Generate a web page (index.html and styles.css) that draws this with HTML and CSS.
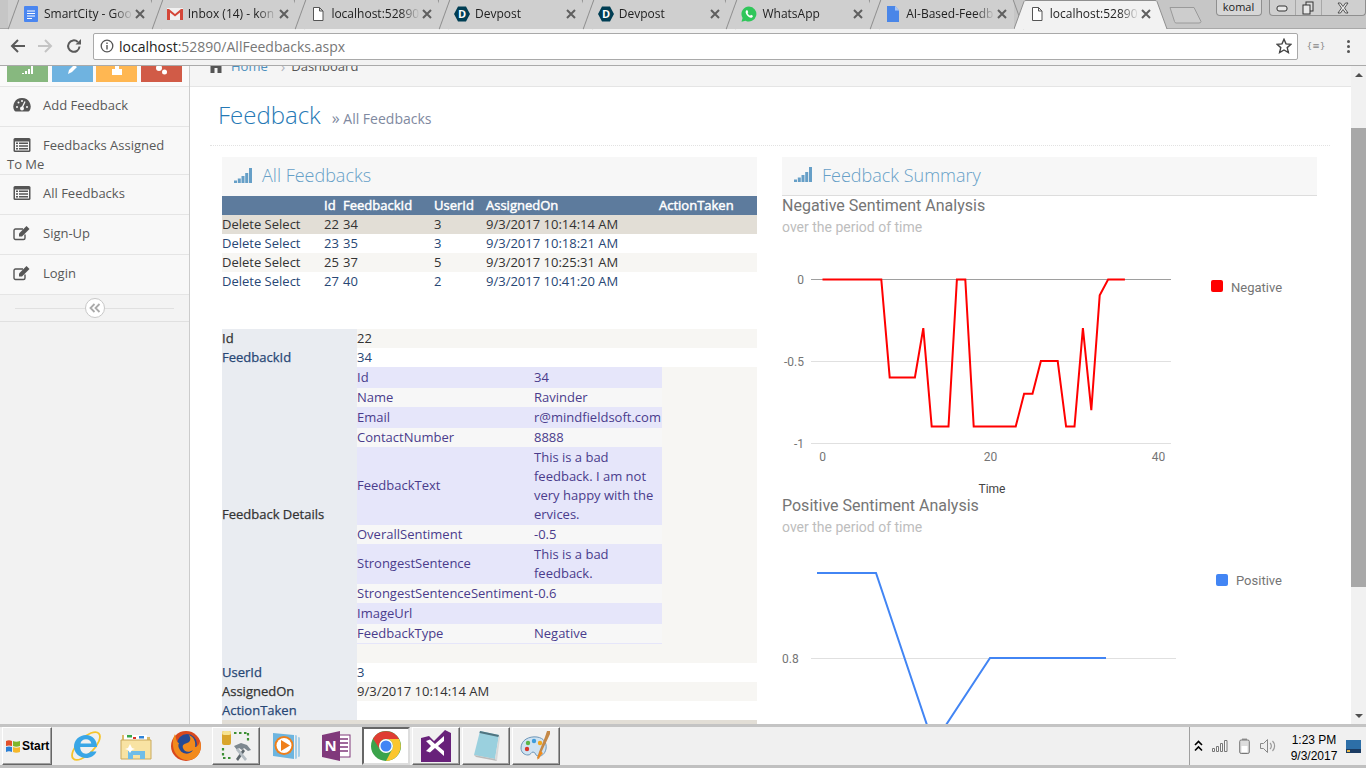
FILE: index.html
```html
<!DOCTYPE html>
<html lang="en">
<head>
<meta charset="utf-8">
<title>AllFeedbacks</title>
<link rel="stylesheet" href="styles.css">
</head>
<body>
<svg class="defs" width="0" height="0" aria-hidden="true"><defs>
  <symbol id="tab-close" viewBox="0 0 12 12"><path d="M2 2l8 8M10 2l-8 8" stroke="#5f5f5f" stroke-width="2" fill="none"/></symbol>
  <symbol id="list-alt" viewBox="0 0 18 16"><rect x=".5" y="1" width="17" height="14" rx="1.500" fill="#555"/><rect x="2" y="4.500" width="14" height="9" fill="#f8f8f8"/><path d="M3 6.300h2M6 6.300h9M3 9h2M6 9h9M3 11.700h2M6 11.700h9" stroke="#555" stroke-width="1.500"/></symbol>
  <symbol id="edit" viewBox="0 0 18 16"><path d="M12 9.500V13a1.500 1.500 0 0 1-1.500 1.500h-8A1.500 1.500 0 0 1 1 13V5.500A1.500 1.500 0 0 1 2.500 4H10" fill="none" stroke="#555" stroke-width="1.400"/><path d="M6 8.500l7.500-7.500 3 3L9 11.500H6z" fill="#555"/></symbol>
  <symbol id="signal" viewBox="0 0 18 15"><path d="M0 12.500h3V15H0zM3.800 10.500h3V15h-3zM7.500 8h3v7h-3zM11.200 5h3v10h-3zM15 0h3v15h-3z" fill="#669fc7"/></symbol>
</defs></svg>
<div class="screen">
  <header class="browser">
    <div class="tabstrip">
      <div class="tab">
        <svg class="tab-ico" viewBox="0 0 16 16"><rect x="1" y="0" width="14" height="16" rx="1" fill="#4a86f0"/><path d="M4 5h8M4 7.500h8M4 10h8M4 12.500h5" stroke="#fff" stroke-width="1"/></svg>
        <span class="tab-title">SmartCity - Goo</span><svg class="tab-x"><use href="#tab-close"/></svg>
      </div>
      <div class="tab">
        <svg class="tab-ico" viewBox="0 0 16 16"><rect x="0" y="2" width="16" height="12" fill="#f1f1f1"/><path d="M0 3v11h3V6.500l5 4 5-4V14h3V3h-2L8 8 2 3z" fill="#d44638"/></svg>
        <span class="tab-title">Inbox (14) - kon</span><svg class="tab-x"><use href="#tab-close"/></svg>
      </div>
      <div class="tab">
        <svg class="tab-ico" viewBox="0 0 16 16"><path d="M3.500 1.500h6l3.500 3.500v9.500h-9.500zM9.500 1.500v3.500h3.500" fill="#fff" stroke="#555" stroke-width="1"/></svg>
        <span class="tab-title">localhost:52890</span><svg class="tab-x"><use href="#tab-close"/></svg>
      </div>
      <div class="tab">
        <svg class="tab-ico" viewBox="0 0 16 16"><path d="M4 .5h8L16 8l-4 7.500H4L0 8z" fill="#003e54"/><text x="8" y="12" class="hex-d">D</text></svg>
        <span class="tab-title">Devpost</span><svg class="tab-x"><use href="#tab-close"/></svg>
      </div>
      <div class="tab">
        <svg class="tab-ico" viewBox="0 0 16 16"><path d="M4 .5h8L16 8l-4 7.500H4L0 8z" fill="#003e54"/><text x="8" y="12" class="hex-d">D</text></svg>
        <span class="tab-title">Devpost</span><svg class="tab-x"><use href="#tab-close"/></svg>
      </div>
      <div class="tab">
        <svg class="tab-ico" viewBox="0 0 16 16"><path d="M8 .5a7.500 7.500 0 0 0-6.400 11.400L.5 15.800l4-1.100A7.500 7.500 0 1 0 8 .5z" fill="#2fc65a"/><path d="M5.400 4.200c-1.200 1-1 3 .6 5 1.500 1.800 3.500 3 5 2.200.8-.4 1-1.300.8-1.700L10 8.800l-.9 1C8 9.400 7 8.300 6.500 7.100l.8-.9-.9-2z" fill="#fff"/></svg>
        <span class="tab-title">WhatsApp</span><svg class="tab-x"><use href="#tab-close"/></svg>
      </div>
      <div class="tab">
        <svg class="tab-ico" viewBox="0 0 16 16"><path d="M2 0h8l4 4.500V16H2z" fill="#4a86e8"/><path d="M10 0l4 4.500h-4z" fill="#a9c6f5"/></svg>
        <span class="tab-title">AI-Based-Feedb</span><svg class="tab-x"><use href="#tab-close"/></svg>
      </div>
      <div class="tab tab-active">
        <svg class="tab-shape" viewBox="0 0 154 29"><path d="M0 29 L10 1.500 Q10.500 .5 12 .5 H141 Q142.500 .5 143 1.500 L153 29" fill="#f2f2f2" stroke="#8f8f8f"/></svg>
        <svg class="tab-ico" viewBox="0 0 16 16"><path d="M3.500 1.500h6l3.500 3.500v9.500h-9.500zM9.500 1.500v3.500h3.500" fill="#fff" stroke="#555" stroke-width="1"/></svg>
        <span class="tab-title">localhost:52890</span><svg class="tab-x"><use href="#tab-close"/></svg>
      </div>
      <svg class="newtab" viewBox="0 0 33 18"><path d="M1 1.500H25L32 15.500Q32 17 30 17H7Q6 17 5.500 15.500z" fill="#cdcdcd" stroke="#9a9a9a"/></svg>
      <div class="winbar">
        <span class="userbtn">komal</span>
        <div class="winbtns">
          <span class="winbtn winbtn-min"><svg viewBox="0 0 12 8" class="win-ico"><rect x="1" y="2" width="10" height="5" rx="2" fill="#e8e8e8" stroke="#333"/></svg></span>
          <span class="winbtn winbtn-max"><svg viewBox="0 0 12 14" class="win-ico win-ico-max"><rect x="4" y="1" width="7" height="9" fill="#ddd" stroke="#333"/><rect x="1" y="4" width="7" height="9" fill="#e8e8e8" stroke="#333"/></svg></span>
          <span class="winbtn winbtn-close"><svg viewBox="0 0 14 12" class="win-ico win-ico-close"><path d="M2 1h2.500L7 4.500 9.500 1H12L8.500 6 12 11H9.500L7 7.500 4.500 11H2L5.500 6z" fill="#e8e8e8" stroke="#333" stroke-width=".8"/></svg></span>
        </div>
      </div>
    </div>
    <div class="toolbar">
      <svg class="nav-ico" viewBox="0 0 16 16"><path d="M15 8H2M8 2 2 8l6 6" fill="none" stroke="#5a5a5a" stroke-width="2"/></svg>
      <svg class="nav-ico nav-fwd" viewBox="0 0 16 16"><path d="M1 8h13M8 2l6 6-6 6" fill="none" stroke="#c4c4c4" stroke-width="2"/></svg>
      <svg class="nav-ico nav-reload" viewBox="0 0 16 16"><path d="M13.500 8.500A5.700 5.700 0 1 1 11.800 4" fill="none" stroke="#5a5a5a" stroke-width="2"/><path d="M9.500 6.500H15V1z" fill="#5a5a5a"/></svg>
      <div class="omnibox">
        <svg class="info-ico" viewBox="0 0 14 14"><circle cx="7" cy="7" r="5.800" fill="none" stroke="#555" stroke-width="1.300"/><path d="M7 6v4.500M7 3.500v1.500" stroke="#555" stroke-width="1.400"/></svg>
        <span class="url"><span class="url-host">localhost</span>:52890/AllFeedbacks.aspx</span>
        <svg class="star" viewBox="0 0 16 16"><path d="M8 1.300l2 4.600 5 .4-3.800 3.300 1.200 4.900L8 12l-4.400 2.500 1.200-4.900L1 6.300l5-.4z" fill="none" stroke="#444" stroke-width="1.400"/></svg>
      </div>
      <span class="ext">{≡}</span>
      <span class="dots"><i></i><i></i><i></i></span>
    </div>
  </header>

  <div class="page">
    <aside class="sidebar">
      <div class="shortcuts">
        <span class="tile tile-green"><svg viewBox="0 0 14 10" class="tile-ico"><path d="M1 9h2V8H1zM4 9h2V6H4zM7 9h2V4H7zM10 9h2V1h-2z" fill="#fff"/></svg></span>
        <span class="tile tile-blue"><svg viewBox="0 0 14 10" class="tile-ico"><path d="M3 9l1-4 5-5 3 2-5 5z" fill="#fff"/></svg></span>
        <span class="tile tile-yellow"><svg viewBox="0 0 14 10" class="tile-ico"><path d="M2 4h10v6H2zM5 4V1h4v3" fill="#fff"/></svg></span>
        <span class="tile tile-red"><svg viewBox="0 0 14 10" class="tile-ico"><circle cx="5" cy="3" r="3" fill="#fff"/><circle cx="10.500" cy="7" r="2.500" fill="#fff"/></svg></span>
      </div>
      <ul class="menu">
        <li class="menu-item">
          <svg class="menu-ico" viewBox="0 0 18 16"><path d="M9 1a8.500 8.500 0 0 0-7.500 12.800c.3.500.7.700 1.200.7h12.600c.5 0 .9-.2 1.200-.7A8.500 8.500 0 0 0 9 1z" fill="#555"/><path d="M9 11 12 4.500" stroke="#f8f8f8" stroke-width="1.300"/><circle cx="9" cy="11.500" r="2" fill="#f8f8f8"/><circle cx="4" cy="10" r="1" fill="#f8f8f8"/><circle cx="5.500" cy="5.500" r="1" fill="#f8f8f8"/><circle cx="9" cy="4" r="1" fill="#f8f8f8"/><circle cx="14" cy="10" r="1" fill="#f8f8f8"/></svg>Add Feedback</li>
        <li class="menu-item menu-wrap"><svg class="menu-ico"><use href="#list-alt"/></svg>Feedbacks Assigned To Me</li>
        <li class="menu-item"><svg class="menu-ico"><use href="#list-alt"/></svg>All Feedbacks</li>
        <li class="menu-item"><svg class="menu-ico"><use href="#edit"/></svg>Sign-Up</li>
        <li class="menu-item"><svg class="menu-ico"><use href="#edit"/></svg>Login</li>
      </ul>
      <div class="collapse"><span class="collapse-btn"><svg class="collapse-ico" viewBox="0 0 12 10"><path d="M5.500 1 1.500 5l4 4M10.500 1l-4 4 4 4" fill="none" stroke="#aaa" stroke-width="1.800"/></svg></span></div>
    </aside>

    <main class="content">
      <div class="breadcrumbs">
        <div class="crumbs-in">
          <svg class="home-ico" viewBox="0 0 16 14"><path d="M8 0 0 7h2.500v7h4V9h3v5h4V7H16z" fill="#555"/></svg>
          <a class="crumb-home">Home</a><span class="crumb-sep">›</span><span class="crumb-cur">Dashboard</span>
        </div>
      </div>
      <div class="inner">
        <div class="page-header">
          <h1 class="page-title">Feedback</h1><small class="page-sub"><span class="raquo">»</span> All Feedbacks</small>
        </div>
        <div class="cols">
          <section class="col">
            <div class="widget-head">
              <svg class="bars"><use href="#signal"/></svg>
              <h4 class="widget-title">All Feedbacks</h4>
            </div>
            <table class="grid">
              <colgroup><col class="g1"><col class="g2"><col class="g3"><col class="g4"><col class="g5"><col class="g6"></colgroup>
              <thead><tr><th></th><th>Id</th><th>FeedbackId</th><th>UserId</th><th>AssignedOn</th><th>ActionTaken</th></tr></thead>
              <tbody>
                <tr class="r-sel"><td>Delete Select</td><td>22</td><td>34</td><td>3</td><td>9/3/2017 10:14:14 AM</td><td></td></tr>
                <tr class="r-a"><td>Delete Select</td><td>23</td><td>35</td><td>3</td><td>9/3/2017 10:18:21 AM</td><td></td></tr>
                <tr class="r-b"><td>Delete Select</td><td>25</td><td>37</td><td>5</td><td>9/3/2017 10:25:31 AM</td><td></td></tr>
                <tr class="r-a"><td>Delete Select</td><td>27</td><td>40</td><td>2</td><td>9/3/2017 10:41:20 AM</td><td></td></tr>
              </tbody>
            </table>
            <table class="details">
              <colgroup><col class="d1"><col class="d2"></colgroup>
              <tr class="r-b"><th>Id</th><td>22</td></tr>
              <tr class="r-a"><th>FeedbackId</th><td>34</td></tr>
              <tr class="r-b"><th class="th-up">Feedback Details</th><td>
                <table class="nested">
                  <colgroup><col class="n1"><col class="n2"></colgroup>
                  <tr class="n-a"><td>Id</td><td>34</td></tr>
                  <tr class="n-b"><td>Name</td><td>Ravinder</td></tr>
                  <tr class="n-a"><td>Email</td><td>r@mindfieldsoft.com</td></tr>
                  <tr class="n-b"><td>ContactNumber</td><td>8888</td></tr>
                  <tr class="n-a"><td class="n-up">FeedbackText</td><td>This is a bad feedback. I am not very happy with the ervices.</td></tr>
                  <tr class="n-b"><td>OverallSentiment</td><td>-0.5</td></tr>
                  <tr class="n-a"><td class="n-up">StrongestSentence</td><td>This is a bad feedback.</td></tr>
                  <tr class="n-b"><td>StrongestSentenceSentiment</td><td>-0.6</td></tr>
                  <tr class="n-a"><td>ImageUrl</td><td></td></tr>
                  <tr class="n-b n-last"><td>FeedbackType</td><td>Negative</td></tr>
                </table>
              </td></tr>
              <tr class="r-a"><th>UserId</th><td>3</td></tr>
              <tr class="r-b"><th>AssignedOn</th><td>9/3/2017 10:14:14 AM</td></tr>
              <tr class="r-a"><th>ActionTaken</th><td></td></tr>
              <tr class="r-foot"><td colspan="2"></td></tr>
            </table>
          </section>
          <section class="col">
            <div class="widget-head widget-head-line">
              <svg class="bars"><use href="#signal"/></svg>
              <h4 class="widget-title">Feedback Summary</h4>
            </div>
            <div class="chart-title">Negative Sentiment Analysis</div>
            <div class="chart-sub">over the period of time</div>
            <svg class="chart chart-neg" viewBox="782 238 535 258">
              <path d="M811 361.500H1171M811 443.500H1171" stroke="#e0e0e0"/>
              <path d="M811 279.500H1171" stroke="#9e9e9e"/>
              <text x="804" y="284" class="tick tick-end">0</text>
              <text x="804" y="366" class="tick tick-end">-0.5</text>
              <text x="804" y="448" class="tick tick-end">-1</text>
              <text x="822.500" y="461" class="tick tick-mid">0</text>
              <text x="990.500" y="461" class="tick tick-mid">20</text>
              <text x="1158.500" y="461" class="tick tick-mid">40</text>
              <text x="992" y="493" class="axis-name">Time</text>
              <polyline class="line-neg" points="822.500,279.500 881.300,279.500 889.700,377.400 914.900,377.400 923.300,328.200 931.700,426.600 948.500,426.600 956.900,279.500 965.300,279.500 973.700,426.600 1015.700,426.600 1024.100,393.800 1032.500,393.800 1040.900,361 1057.700,361 1066.100,426.600 1074.500,426.600 1082.900,328.200 1091.300,410.200 1099.700,295.400 1108.100,279.500 1124.900,279.500"/>
              <rect x="1211" y="280" width="12" height="12" rx="2" fill="#f00"/>
              <text x="1231" y="292" class="legend">Negative</text>
            </svg>
            <div class="chart-title">Positive Sentiment Analysis</div>
            <div class="chart-sub">over the period of time</div>
            <svg class="chart chart-pos" viewBox="782 538 535 190">
              <path d="M811 658.500H1176" stroke="#e0e0e0"/>
              <text x="782" y="663" class="tick">0.8</text>
              <polyline class="line-pos" points="817,573 876,573 928,728 944,728 990,658 1106,658"/>
              <rect x="1216" y="574" width="12" height="12" rx="2" fill="#4285f4"/>
              <text x="1236" y="585" class="legend">Positive</text>
            </svg>
          </section>
        </div>
      </div>
    </main>

    <div class="scrollbar">
      <span class="sb-btn"><i class="arrow-up"></i></span>
      <span class="sb-thumb"></span>
      <span class="sb-fill"></span>
      <span class="sb-btn"><i class="arrow-down"></i></span>
    </div>
  </div>

  <footer class="taskbar">
    <div class="start-btn">
      <svg class="flag" viewBox="0 0 16 16"><path d="M1 3q3-1.500 6 0v5q-3-1-6 0z" fill="#e2502a"/><path d="M8 3q3 1.500 7 0v5q-4 1.500-7 0z" fill="#7eb62c"/><path d="M1 9q3-1 6 0v5q-3-1.500-6 0z" fill="#2b7fd4"/><path d="M8 9q3 1.500 7 0v5q-4 1.500-7 0z" fill="#f5b82b"/></svg>
      <span class="start-txt">Start</span>
    </div>
    <div class="task-icons">
      <span class="task">
        <svg class="task-ico" viewBox="0 0 32 32"><ellipse cx="16" cy="16" rx="18" ry="8" fill="none" stroke="#f6c42c" stroke-width="1.800" transform="rotate(-45 16 16)"/><path d="M4.500 17h22.500c.2-7-4.500-12-11-12C9.500 5 4 10 4 16.500 4 23 9.500 28 16 28c5 0 8.800-2.500 10.500-6.500h-6c-1 1.400-2.500 2.200-4.500 2.200-3.300 0-5.800-2.700-5.800-6.700zm6-3.500c.4-2.500 2.500-4.300 5.500-4.300 2.900 0 5 1.800 5.300 4.300z" fill="#39a6e6" fill-rule="evenodd"/></svg>
      </span>
      <span class="task">
        <svg class="task-ico" viewBox="0 0 32 32"><path d="M2 5h11l2 2h15v22H2z" fill="#d9b968"/><rect x="4" y="5" width="23" height="7" fill="#fff"/><rect x="7" y="5" width="5" height="2.500" fill="#37a84a"/><rect x="13" y="7" width="3" height="2" fill="#d9372b"/><rect x="19" y="6" width="5" height="2.500" fill="#2f83d8"/><path d="M1 10h30v19H1z" fill="#f8e3a3" stroke="#c9a95c"/><path d="M8 21h17v8h-5v-4h-7v4H8z" fill="#6fbde8"/><path d="M8 18l2-4 2 4 3 1-3 1-2 3-2-3-3-1z" fill="#fff"/></svg>
      </span>
      <span class="task">
        <svg class="task-ico" viewBox="0 0 32 32"><circle cx="16" cy="16" r="15" fill="#d9481c"/><circle cx="17" cy="14" r="10" fill="#264a94"/><path d="M5 4C2 10 2 18 6 24c4 6 13 8 19 4 5-3 7-10 5-17-1 4-3 6-5 6 1-5-1-10-6-12 2 3 2 7-2 8-3 1-5 2-4 5 1 4 6 5 10 2-3 5-10 5-13 0-2-3-2-5-1-7-2 0-3-4-4-9z" fill="#f28a1c"/></svg>
      </span>
      <span class="task task-raised">
        <svg class="task-ico" viewBox="0 0 32 32"><path d="M14 3h2.500M19 3h2.500M24 3h2.500M28 3v2.500M28 8v2.500M3 18v2.500M3 23v2.500M3 28h2.500M8 28h2.500" stroke="#3d8f35" stroke-width="2.200"/><rect x="2" y="1" width="9" height="14" rx="2" fill="#d9a52b"/><rect x="2" y="1" width="9" height="4" rx="2" fill="#f6e391"/><path d="M14 16l7-3 6 2 4 5-3 1-4-3-2 2-3-2-2 2z" fill="#7d8890"/><path d="M16 29l7-10 2 2-7 10z" fill="#5d666c"/><path d="M18 18l9 11-2 2-9-11z" fill="#b4bcc2"/></svg>
      </span>
      <span class="task">
        <svg class="task-ico" viewBox="0 0 32 32"><path d="M3 3l21 2v24L3 26z" fill="#6db5df"/><path d="M25 5l2 .5v23l-2 .5zM28 7l2 .5v19l-2 .5z" fill="#a6cfe8"/><circle cx="14" cy="15.500" r="9.500" fill="#ef7f1a"/><circle cx="14" cy="15.500" r="7.500" fill="#fff"/><path d="M11 10 20 15.500l-9 5.500z" fill="#ef7f1a"/></svg>
      </span>
      <span class="task">
        <svg class="task-ico" viewBox="0 0 32 32"><rect x="17" y="5" width="13" height="22" fill="#fff" stroke="#80397b"/><path d="M20 9h8M20 13h8M20 17h8M20 21h8" stroke="#80397b" stroke-width="1.500"/><path d="M2 5 20 1v30L2 27z" fill="#80397b"/><text x="10.500" y="21" class="note-n">N</text></svg>
      </span>
      <span class="task task-active">
        <svg class="task-ico" viewBox="0 0 32 32"><circle cx="16" cy="16" r="15" fill="#3ba34b"/><path d="M16 9H29A15 15 0 0 0 3 8.500L9.900 19.500A7 7 0 0 1 16 9z" fill="#df3d32"/><path d="M16 9H29A15 15 0 0 1 16 31L22.100 19.500A7 7 0 0 0 16 9z" fill="#fbc62f"/><circle cx="16" cy="16" r="7" fill="#fff"/><circle cx="16" cy="16" r="5.500" fill="#4285f4"/></svg>
      </span>
      <span class="task task-raised">
        <svg class="task-ico" viewBox="0 0 32 32"><path d="M1 8 9 6l5 5L25 0l6 3v29H1z" fill="#68217a"/><path d="M6 11l4-1.500 5 4.500 9-8v20l-9-8-5 4.500L6 21l5-5zM18 16l6 5V11z" fill="#fff" fill-rule="evenodd"/></svg>
      </span>
      <span class="task task-raised">
        <svg class="task-ico" viewBox="0 0 32 32"><path d="M10 1l19 4-4 24L4 25z" fill="#9ad0de"/><path d="M10 1l19 4-.5 2L9.500 3z" fill="#4f7480"/><path d="M29 5l1 2-3 24-2-2z" fill="#d8d8d8"/><path d="M4 25l21 4 2 2-21-4z" fill="#bbb"/></svg>
      </span>
      <span class="task task-raised">
        <svg class="task-ico" viewBox="0 0 32 32"><path d="M1 18C1 10 9 6 17 7c7 1 10 6 9 12-1 5-5 8-8 7-3 0-2-4-5-4-2 0-2 3-5 3-4 0-7-3-7-7z" fill="#cfe3f2" stroke="#6f97b8"/><circle cx="7" cy="19" r="2.200" fill="#d9372b"/><circle cx="8" cy="13" r="2.200" fill="#5cb547"/><circle cx="14" cy="11" r="2.200" fill="#3f9ddb"/><circle cx="20" cy="13" r="2.200" fill="#f2a71e"/><path d="M25 7l2-6 3 0 0 3-8 17-3 8-2-1 2-6z" fill="#c48846"/><path d="M20 21l3 2-6 7z" fill="#ef8a1c"/></svg>
      </span>
    </div>
    <div class="tray">
      <svg class="tray-up" viewBox="0 0 9 12"><path d="M1 5l3.500-3.500L8 5M1 10.500 4.500 7 8 10.500" fill="none" stroke="#000" stroke-width="1.600"/></svg>
      <svg class="tray-ico tray-signal" viewBox="0 0 16 12"><path d="M.5 8.500h2v3h-2zM4.500 6.500h2v5h-2zM8.500 3.500h2v8h-2zM12.500.5h2.500v11h-2.500z" fill="#f8f8f8" stroke="#777"/></svg>
      <svg class="tray-ico tray-batt" viewBox="0 0 11 16"><rect x="3" y=".5" width="5" height="2" fill="#999"/><rect x=".7" y="2" width="9.600" height="13.500" rx="1.500" fill="#ddd" stroke="#777"/><rect x="2.500" y="8" width="6" height="6" fill="#fff"/></svg>
      <svg class="tray-ico tray-sound" viewBox="0 0 16 14"><path d="M.5 4.500h3l4-4v13l-4-4h-3z" fill="#eee" stroke="#888"/><path d="M10 4a4 4 0 0 1 0 6M12.500 2a7 7 0 0 1 0 10" fill="none" stroke="#999" stroke-width="1.200"/></svg>
      <div class="clock"><span>1:23 PM</span><span>9/3/2017</span></div>
      <svg class="tray-desk" viewBox="0 0 15 13"><rect width="15" height="13" fill="#2d6fa8"/><rect y="9" width="15" height="4" fill="#1b3c63"/><rect x="1" y="10" width="3" height="2" fill="#e6b84a"/></svg>
    </div>
  </footer>
</div>
</body>
</html>
```

FILE: styles.css
```css
* { box-sizing: border-box; }
html, body { margin: 0; padding: 0; height: 100%; overflow: hidden; background: #fff; }
body { font-family: "Open Sans", sans-serif; font-size: 13px; color: #393939; }
.defs { position: absolute; }
.screen { width: 1366px; height: 768px; display: flex; flex-direction: column; overflow: hidden; }

/* browser chrome */
.browser { flex: 0 0 66px; display: flex; flex-direction: column; background: #f2f2f2; }
.tabstrip { height: 29px; background: #c6c6c6; border-bottom: 1px solid #a8a8a8; display: flex; padding-left: 8px; position: relative; }
.tab { width: 143.7px; height: 29px; flex: none; display: flex; align-items: center; padding: 0 0 2px 15px; position: relative; background: #cfcfcf; }
.tab::before, .tab::after { content: ""; position: absolute; top: -1px; width: 1px; height: 31px; background: #8f8f8f; }
.tab::before { left: 5px; transform: rotate(20deg); }
.tab::after { right: -5px; transform: rotate(-20deg); }
.tab-active { background: transparent; z-index: 2; }
.tab-active::before, .tab-active::after { display: none; }
.tab-shape { position: absolute; left: 0; top: 0; width: 154px; height: 29px; }
.tab-ico { width: 16px; height: 16px; flex: none; position: relative; margin-right: 5px; }
.tab-title { width: 89px; flex: none; white-space: nowrap; overflow: hidden; font-size: 12px; color: #222; position: relative; -webkit-mask-image: linear-gradient(90deg, #000 78%, transparent 100%); mask-image: linear-gradient(90deg, #000 78%, transparent 100%); }
.tab-x { width: 12px; height: 12px; flex: none; margin-left: 1px; position: relative; }
.hex-d { font: 700 11px "Open Sans", sans-serif; fill: #fff; text-anchor: middle; }
.newtab { width: 33px; height: 18px; flex: none; margin: 6px 0 0 11px; position: relative; z-index: 1; }
.winbar { flex: 1; display: flex; align-items: flex-start; }
.userbtn { margin-left: 14px; width: 46px; height: 16px; border: 1px solid #8f8f8f; border-top: 0; border-radius: 0 0 4px 4px; background: #d6d6d6; font-size: 11px; text-align: center; line-height: 14px; color: #222; }
.winbtns { margin-left: 7px; width: 97px; height: 16px; display: flex; border: 1px solid #8f8f8f; border-top: 0; border-radius: 0 0 4px 4px; background: #cfcfcf; }
.winbtn { display: flex; align-items: center; justify-content: center; height: 15px; border-right: 1px solid #a8a8a8; }
.winbtn-min { width: 26px; }
.winbtn-max { width: 26px; }
.winbtn-close { flex: 1; border-right: 0; }
.win-ico { width: 12px; height: 8px; }
.win-ico-max { height: 14px; }
.win-ico-close { width: 14px; height: 12px; }

.toolbar { flex: 1; display: flex; align-items: center; padding: 0 0 2px 10px; border-bottom: 1px solid #aaa; background: #f2f2f2; }
.nav-ico { width: 16px; height: 16px; flex: none; }
.nav-fwd { margin-left: 11px; }
.nav-reload { margin-left: 13px; }
.omnibox { margin-left: 11px; width: 1205px; height: 27px; background: #fff; border: 1px solid #a9a9a9; border-radius: 2px; display: flex; align-items: center; padding: 0 5px 0 6px; }
.info-ico { width: 14px; height: 14px; flex: none; }
.url { margin-left: 5px; flex: 1; font-size: 14px; color: #777; }
.url-host { color: #222; }
.star { width: 16px; height: 16px; flex: none; margin-right: 0; }
.ext { margin-left: 8px; width: 20px; font-size: 9px; color: #888; text-align: center; font-family: "DejaVu Sans", sans-serif; }
.dots { margin-left: 21px; display: flex; flex-direction: column; gap: 2px; }
.dots i { display: block; width: 3px; height: 3px; border-radius: 50%; background: #555; }

/* page */
.page { flex: 0 0 658px; display: flex; overflow: hidden; background: #fff; }
.sidebar { width: 190px; flex: none; background: #f2f2f2; border-right: 1px solid #ccc; }
.shortcuts { height: 21px; display: flex; padding-left: 7px; border-bottom: 1px solid #e5e5e5; background: #fafafa; }
.tile { width: 41px; height: 16px; margin-right: 3.500px; display: flex; justify-content: center; overflow: hidden; }
.tile-ico { width: 14px; height: 10px; margin-top: -1px; }
.tile-green { background: #87b87f; }
.tile-blue { background: #6fb3e0; }
.tile-yellow { background: #ffb752; }
.tile-red { background: #d15b47; }
.menu { list-style: none; margin: 0; padding: 0; }
.menu-item { padding: 9px 0 11px 7px; line-height: 19px; color: #585858; background: #f8f8f8; border-bottom: 1px solid #e5e5e5; }
.menu-wrap { padding: 9px 20px 0 7px; }
.menu-ico { width: 18px; height: 16px; margin: 0 12px 0 6px; vertical-align: -3px; }
.collapse { height: 27px; border-bottom: 1px solid #e0e0e0; background: #f3f3f3; display: flex; align-items: center; justify-content: center; position: relative; }
.collapse::before { content: ""; position: absolute; left: 15px; width: 159px; top: 13px; height: 1px; background: #e0e0e0; }
.collapse-btn { width: 20px; height: 20px; border-radius: 50%; border: 1px solid #c8c8c8; background: #fff; position: relative; display: flex; align-items: center; justify-content: center; }
.collapse-ico { width: 12px; height: 10px; }

.content { flex: 1; min-width: 0; overflow: hidden; }
.breadcrumbs { height: 21px; background: #f5f5f5; border-bottom: 1px solid #e5e5e5; overflow: hidden; }
.crumbs-in { display: flex; align-items: center; height: 20px; margin-top: -10px; padding-left: 18px; }
.home-ico { width: 16px; height: 14px; margin-right: 7px; }
.crumb-home { color: #4c8fbd; }
.crumb-sep { margin: 0 6px 0 13px; color: #b2b6bf; font-size: 15px; }
.crumb-cur { color: #555; }
.inner { padding: 0 21px 0 20px; }
.page-header { height: 59px; border-bottom: 1px dotted #e2e2e2; padding: 12px 0 0 8px; display: flex; align-items: baseline; }
.page-title { margin: 0; font-size: 24px; font-weight: 300; color: #2679b5; line-height: 32px; }
.page-sub { margin-left: 11px; font-size: 14px; color: #8089a0; }
.raquo { font-size: 16px; }
.cols { display: flex; padding: 11px 0 0 12px; gap: 25px; }
.col { width: 535px; flex: none; }

.widget-head { height: 39px; background: #f7f7f7; display: flex; align-items: center; padding: 0 0 3px 12px; }
.widget-head-line { border-bottom: 1px solid #ddd; }
.bars { width: 18px; height: 15px; flex: none; margin-right: 10px; }
.widget-title { margin: 0; font-size: 18px; font-weight: 300; color: #669fc7; }

.grid, .details, .nested { border-collapse: collapse; table-layout: fixed; border-spacing: 0; }
.grid td, .grid th, .details td, .details th, .nested td { padding: 0; line-height: 19px; text-align: left; font-size: 13px; }
.grid { width: 535px; }
.g1 { width: 102px; } .g2 { width: 19px; } .g3 { width: 91px; } .g4 { width: 52px; } .g5 { width: 173px; } .g6 { width: 98px; }
.grid th { background: #5d7b9d; color: #fff; font-weight: 400; height: 19px; -webkit-text-stroke: .45px #fff; }
.r-sel { background: #e2ded6; color: #333; }
.r-a { background: #fff; color: #284775; }
.r-b { background: #f7f6f3; color: #333; }
.details { width: 535px; margin-top: 38px; }
.d1 { width: 135px; } .d2 { width: 400px; }
.details > tbody > tr > th { background: #e9ecf1; font-weight: 400; -webkit-text-stroke: .25px currentColor; }
.details > tbody > tr > th.th-up { padding-bottom: 2px; }
.r-foot td { background: #e2ded6; height: 19px; }
.nested { width: 305px; margin-bottom: 19px; color: #4a3c8c; }
.n1 { width: 177px; } .n2 { width: 128px; }
.nested td { vertical-align: middle; overflow: visible; }
.n-a { background: #e6e6fa; }
.n-a td { padding: 1px 0; }
.n-a td.n-up { padding: 0 0 2px; }
.n-b { background: #f7f7f7; }
.n-last { border-bottom: 1px solid #e6e6fa; }

.chart-title { font-family: Roboto, sans-serif; font-size: 16px; color: #757575; line-height: 20px; }
.chart-sub { font-family: Roboto, sans-serif; font-size: 14px; color: #bdbdbd; line-height: 22px; }
.chart { display: block; width: 535px; }
.chart-neg { height: 258px; }
.chart-pos { height: 190px; }
.tick { font: 12px Roboto, sans-serif; fill: #757575; }
.tick-end { text-anchor: end; }
.tick-mid { text-anchor: middle; }
.axis-name { font: 12px Roboto, sans-serif; fill: #444; text-anchor: middle; }
.legend { font: 13px Roboto, sans-serif; fill: #757575; }
.line-neg { fill: none; stroke: #f00; stroke-width: 2; }
.line-pos { fill: none; stroke: #4285f4; stroke-width: 2; }

.scrollbar { width: 15px; flex: none; background: #f1f1f1; display: flex; flex-direction: column; }
.sb-btn { height: 17px; flex: none; display: flex; align-items: center; justify-content: center; }
.sb-thumb { height: 459px; margin-top: 45px; background: #a8a8a8; flex: none; }
.sb-fill { flex: 1; }
.arrow-up { width: 0; height: 0; border: 4px solid transparent; border-top: 0; border-bottom: 4px solid #505050; }
.arrow-down { width: 0; height: 0; border: 4px solid transparent; border-bottom: 0; border-top: 4px solid #505050; }

/* taskbar */
.taskbar { flex: 0 0 44px; display: flex; background: #f0f0f0; border-top: 3px solid #c4c4c4; border-bottom: 3px solid #c0c0c0; padding-left: 2px; font-family: "Liberation Sans", sans-serif; }
.start-btn { width: 50px; height: 38px; flex: none; display: flex; align-items: center; padding-left: 2px; background: #f0f0f0; border: 1px solid; border-color: #fff #666 #666 #fff; box-shadow: inset -1px -1px 0 #a0a0a0; }
.flag { width: 16px; height: 16px; flex: none; }
.start-txt { font-size: 12px; font-weight: 700; color: #000; margin-left: 1px; }
.task-icons { display: flex; margin-left: 10px; gap: 2.500px; }
.task { width: 47.500px; height: 38px; display: flex; align-items: center; justify-content: center; }
.task-ico { width: 32px; height: 32px; }
.task-raised { border: 1px solid; border-color: #fff #666 #666 #fff; box-shadow: inset -1px -1px 0 #a0a0a0; }
.task-active { background: #fff; border: 2px solid; border-color: #666 #ddd #ddd #666; }
.tray { margin-left: auto; width: 177px; height: 38px; flex: none; display: flex; align-items: center; border-left: 1px solid #a0a0a0; padding-left: 4px; }
.tray-up { width: 9px; height: 12px; flex: none; }
.tray-ico { flex: none; }
.tray-signal { width: 16px; height: 12px; margin-left: 9px; }
.tray-batt { width: 11px; height: 16px; margin-left: 11px; }
.tray-sound { width: 16px; height: 14px; margin-left: 10px; }
.clock { width: 62px; margin: 3px 0 0 7px; display: flex; flex-direction: column; align-items: center; font-size: 12px; line-height: 16px; color: #000; }
.tray-desk { width: 15px; height: 13px; flex: none; margin-left: 1px; }
.note-n { font: 700 15px "Open Sans", sans-serif; fill: #fff; text-anchor: middle; }
```
